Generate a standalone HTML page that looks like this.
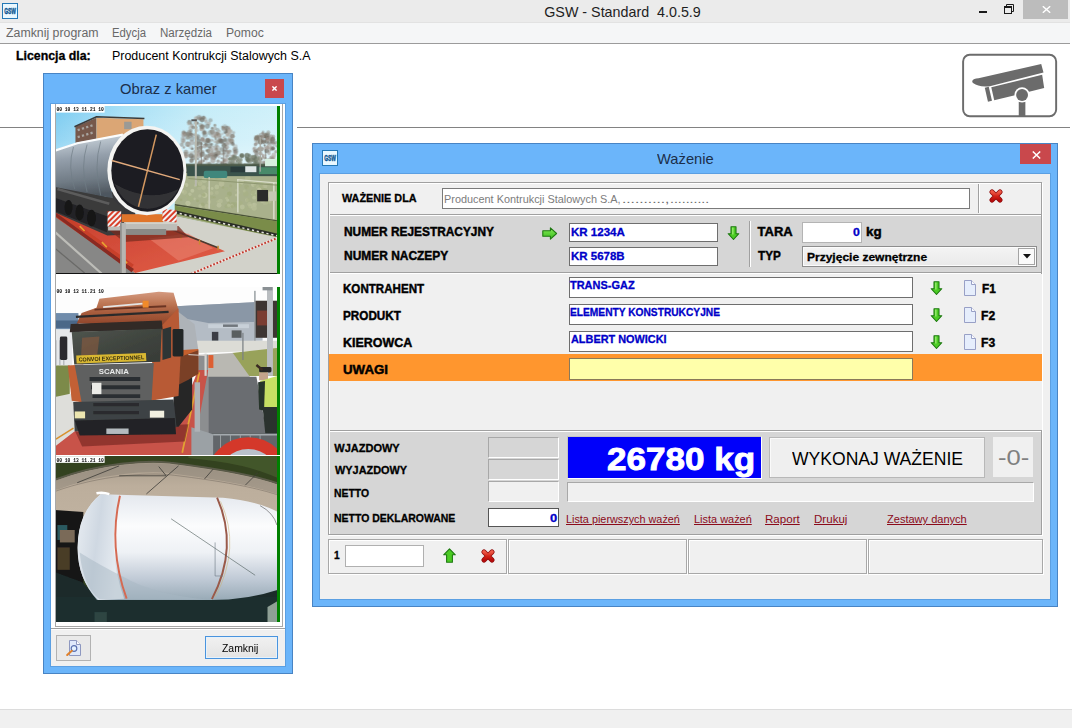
<!DOCTYPE html>
<html lang="pl">
<head>
<meta charset="utf-8">
<title>GSW - Standard 4.0.5.9</title>
<style>
html,body{margin:0;padding:0;}
body{width:1072px;height:728px;overflow:hidden;background:#fff;position:relative;font-family:"Liberation Sans","DejaVu Sans",sans-serif;color:#000;}
.a{position:absolute;box-sizing:border-box;}
.t{position:absolute;white-space:nowrap;line-height:normal;transform-origin:0 0;}
.lnk{text-decoration:underline;}
svg{position:absolute;display:block;overflow:hidden;}
</style>
</head>
<body>
<div class="a" style="left:0px;top:0px;width:1070px;height:22px;background:#ebebeb;"></div>
<div class="a" style="left:0px;top:22px;width:1070px;height:1px;background:#e2e2e2;"></div>
<div class="a" style="left:0px;top:23px;width:1070px;height:20px;background:#f5f6f7;"></div>
<div class="a" style="left:0px;top:43px;width:1070px;height:1px;background:#9b9b9b;"></div>
<div class="a" style="left:0px;top:127px;width:1070px;height:1px;background:#828282;"></div>
<div class="a" style="left:293px;top:120px;width:4px;height:15px;background:#fff;"></div>
<div class="a" style="left:0px;top:709px;width:1072px;height:19px;background:#f0f0f0;border-top:1px solid #dcdcdc;"></div>
<svg id="ico1" style="left:2px;top:3px" width="16" height="16" viewBox="0 0 16 16"><rect x="0.5" y="0.5" width="15" height="15" fill="#e9f8ff" stroke="#2478b6"/><text x="2.2" y="11.3" font-size="8.6" font-weight="bold" fill="#0f5590" stroke="#0f5590" stroke-width="0.4" font-family="Liberation Sans, sans-serif" textLength="11.8" lengthAdjust="spacingAndGlyphs">GSW</text></svg>
<span class="t " id="tt" style="left:544.24px;top:3.66px;font-size:14.3px;font-weight:normal;color:#1e1e1e;">GSW - Standard&nbsp; 4.0.5.9</span>
<div class="a" style="left:979px;top:11px;width:8px;height:2px;background:#1a1a1a;"></div>
<svg style="left:1004px;top:4px" width="11" height="11" viewBox="0 0 11 11"><path d="M2.5 2V0.5H9.5V7.5H8" fill="none" stroke="#1a1a1a"/><rect x="0.5" y="2.5" width="7" height="7" fill="none" stroke="#1a1a1a"/><rect x="0" y="2" width="8" height="2" fill="#1a1a1a"/></svg>
<div class="a" style="left:1023px;top:0px;width:45px;height:19px;background:#bcbcbc;"></div>
<svg style="left:1041.5px;top:6px" width="9" height="7" viewBox="0 0 9 7"><path d="M0.8 0.3L8.2 6.7M8.2 0.3L0.8 6.7" stroke="#fff" stroke-width="1.5" fill="none"/></svg>
<span class="t " id="m1" style="left:6.25px;top:26.24px;font-size:12px;font-weight:normal;color:#686868;transform:scaleX(1.0276);">Zamknij program</span>
<span class="t " id="m2" style="left:112.20px;top:26.24px;font-size:12px;font-weight:normal;color:#686868;transform:scaleX(0.9435);">Edycja</span>
<span class="t " id="m3" style="left:159.97px;top:26.24px;font-size:12px;font-weight:normal;color:#686868;transform:scaleX(0.9620);">Narzędzia</span>
<span class="t " id="m4" style="left:225.95px;top:26.24px;font-size:12px;font-weight:normal;color:#686868;transform:scaleX(1.0120);">Pomoc</span>
<span class="t " id="lic1" style="left:16.34px;top:49.04px;font-size:12px;font-weight:bold;color:#000;transform:scaleX(1.0259);-webkit-text-stroke:0.3px #000;">Licencja dla:</span>
<span class="t " id="lic2" style="left:111.99px;top:49.04px;font-size:12px;font-weight:normal;color:#000;transform:scaleX(1.0371);">Producent Kontrukcji Stalowych S.A</span>
<svg id="camicon" style="left:950px;top:44px" width="122" height="83" viewBox="0 0 1070 728"><rect x="115" y="95" width="816" height="538" rx="58" fill="#fff" stroke="#6c6c6c" stroke-width="17"/><g fill="#6b6b6b"><path d="M196 322Q205 300 250 300L800 176L820 250L350 370Q250 380 205 345Q192 335 196 322Z"/><path d="M305 383L340 376L368 497L333 506Z"/><path d="M362 380L808 270L826 386L388 493Z"/><rect x="603" y="505" width="58" height="128"/></g><circle cx="632" cy="447" r="67" fill="#fff"/><circle cx="632" cy="447" r="52" fill="#6b6b6b"/></svg>

<div class="a" style="left:43px;top:73px;width:250px;height:601px;background:#6bb5fa;border:1px solid #4884c4;"></div>
<span class="t " id="ct" style="left:119.64px;top:80.86px;font-size:14.3px;font-weight:normal;color:#1b2f4a;transform:scaleX(1.0313);">Obraz z kamer</span>
<div class="a" style="left:265px;top:79px;width:19px;height:19px;background:#c9484c;"></div>
<svg style="left:272px;top:86px" width="5" height="5" viewBox="0 0 5 5"><path d="M0.4 0.4L4.6 4.6M4.6 0.4L0.4 4.6" stroke="#fff" stroke-width="1.4" fill="none"/></svg>
<div class="a" style="left:50px;top:103px;width:236px;height:564px;background:#5b9fe2;"></div>
<div class="a" style="left:51px;top:104px;width:234px;height:562px;background:#f0f0f0;"></div>
<div class="a" style="left:51px;top:104px;width:234px;height:524px;background:#fff;"></div>
<div class="a" style="left:51px;top:628px;width:234px;height:1px;background:#a0a0a0;"></div>
<div class="a" style="left:51px;top:629px;width:234px;height:1px;background:#fff;"></div>
<div class="a" style="left:55px;top:104px;width:1px;height:523px;background:#a8a8a8;"></div>
<div class="a" style="left:282px;top:104px;width:1px;height:523px;background:#a8a8a8;"></div>
<div class="a" style="left:55px;top:626px;width:228px;height:1px;background:#a8a8a8;"></div>
<div class="a" style="left:277px;top:106px;width:3px;height:168px;background:#008000;"></div>
<div class="a" style="left:277px;top:287px;width:3px;height:168px;background:#008000;"></div>
<div class="a" style="left:277px;top:456px;width:3px;height:166px;background:#008000;"></div>
<svg id="p1" style="left:56px;top:105px" width="221" height="169" viewBox="24.3 20.2 894.1 683.8" preserveAspectRatio="none">
<defs>
<linearGradient id="sky1" x1="0" y1="0" x2="1" y2="0.35"><stop offset="0" stop-color="#70c6ef"/><stop offset="0.3" stop-color="#a6dff6"/><stop offset="0.6" stop-color="#c4ecf8"/><stop offset="1" stop-color="#d2f1fa"/></linearGradient>
<linearGradient id="sky1b" x1="0" y1="0" x2="0" y2="1"><stop offset="0" stop-color="#fff" stop-opacity="0"/><stop offset="0.5" stop-color="#fff" stop-opacity="0.15"/><stop offset="1" stop-color="#fff" stop-opacity="0.55"/></linearGradient>
<linearGradient id="pipe1" x1="0" y1="0" x2="0.12" y2="1"><stop offset="0" stop-color="#f4f7f9"/><stop offset="0.1" stop-color="#c4ced6"/><stop offset="0.4" stop-color="#949fab"/><stop offset="0.75" stop-color="#707b85"/><stop offset="1" stop-color="#4e565e"/></linearGradient>
<linearGradient id="plat1" x1="0" y1="0" x2="1" y2="1"><stop offset="0" stop-color="#c63e2e"/><stop offset="1" stop-color="#e25e48"/></linearGradient>
<filter id="bl1" x="-5%" y="-5%" width="110%" height="110%"><feGaussianBlur stdDeviation="2.2"/></filter>
<filter id="bl1b" x="-5%" y="-5%" width="110%" height="110%"><feGaussianBlur stdDeviation="3"/></filter>
<pattern id="chev" width="16" height="16" patternUnits="userSpaceOnUse" patternTransform="rotate(45)"><rect width="16" height="16" fill="#f2f2f2"/><rect width="8" height="16" fill="#d8402c"/></pattern>
</defs>
<rect x="0" y="0" width="940" height="720" fill="url(#sky1)"/>
<rect x="0" y="0" width="940" height="320" fill="url(#sky1b)"/>
<g filter="url(#bl1b)">
<circle cx="598" cy="205" r="8.6" fill="#8d857c" opacity="0.68"/><circle cx="663" cy="213" r="10.4" fill="#a39a92" opacity="0.36"/><circle cx="593" cy="181" r="4.6" fill="#b0a8a0" opacity="0.37"/><circle cx="541" cy="131" r="8.4" fill="#8a8478" opacity="0.73"/><circle cx="567" cy="141" r="10.8" fill="#8d857c" opacity="0.57"/><circle cx="647" cy="218" r="7.8" fill="#8a8478" opacity="0.47"/><circle cx="626" cy="131" r="8.1" fill="#6f6a60" opacity="0.43"/><circle cx="667" cy="218" r="8.0" fill="#8a8478" opacity="0.43"/><circle cx="590" cy="111" r="6.2" fill="#8a8478" opacity="0.72"/><circle cx="586" cy="208" r="5.3" fill="#9c9088" opacity="0.45"/><circle cx="560" cy="137" r="10.1" fill="#6f6a60" opacity="0.53"/><circle cx="595" cy="153" r="7.6" fill="#a39a92" opacity="0.65"/><circle cx="644" cy="227" r="4.3" fill="#6f6a60" opacity="0.38"/><circle cx="546" cy="138" r="9.7" fill="#7a746a" opacity="0.63"/><circle cx="561" cy="127" r="7.2" fill="#9c9088" opacity="0.39"/><circle cx="604" cy="253" r="4.5" fill="#6f6a60" opacity="0.63"/><circle cx="564" cy="90" r="9.8" fill="#7a746a" opacity="0.64"/><circle cx="648" cy="132" r="10.6" fill="#7a746a" opacity="0.42"/><circle cx="626" cy="186" r="9.4" fill="#a39a92" opacity="0.65"/><circle cx="551" cy="227" r="7.5" fill="#a39a92" opacity="0.53"/><circle cx="540" cy="141" r="9.7" fill="#9c9088" opacity="0.57"/><circle cx="591" cy="74" r="8.8" fill="#b0a8a0" opacity="0.73"/><circle cx="632" cy="204" r="5.6" fill="#a39a92" opacity="0.35"/><circle cx="629" cy="133" r="6.0" fill="#a39a92" opacity="0.52"/><circle cx="571" cy="225" r="10.7" fill="#6f6a60" opacity="0.69"/><circle cx="674" cy="145" r="9.2" fill="#b0a8a0" opacity="0.71"/><circle cx="626" cy="78" r="9.6" fill="#b0a8a0" opacity="0.51"/><circle cx="568" cy="213" r="6.8" fill="#a39a92" opacity="0.38"/><circle cx="620" cy="209" r="6.4" fill="#8d857c" opacity="0.39"/><circle cx="558" cy="140" r="10.6" fill="#8a8478" opacity="0.36"/><circle cx="656" cy="114" r="5.0" fill="#7a746a" opacity="0.73"/><circle cx="568" cy="129" r="4.8" fill="#b0a8a0" opacity="0.75"/><circle cx="558" cy="185" r="4.6" fill="#8d857c" opacity="0.65"/><circle cx="609" cy="101" r="8.8" fill="#8a8478" opacity="0.36"/><circle cx="667" cy="148" r="5.0" fill="#8a8478" opacity="0.72"/><circle cx="614" cy="115" r="8.5" fill="#8d857c" opacity="0.63"/><circle cx="609" cy="230" r="5.2" fill="#9c9088" opacity="0.44"/><circle cx="557" cy="152" r="8.5" fill="#8a8478" opacity="0.67"/><circle cx="686" cy="161" r="9.6" fill="#9c9088" opacity="0.51"/><circle cx="624" cy="128" r="7.4" fill="#6f6a60" opacity="0.36"/><circle cx="654" cy="179" r="5.8" fill="#6f6a60" opacity="0.59"/><circle cx="572" cy="245" r="9.1" fill="#7a746a" opacity="0.73"/><circle cx="587" cy="205" r="5.6" fill="#a39a92" opacity="0.49"/><circle cx="533" cy="181" r="8.3" fill="#8d857c" opacity="0.54"/><circle cx="571" cy="97" r="4.6" fill="#6f6a60" opacity="0.40"/><circle cx="560" cy="224" r="5.4" fill="#a39a92" opacity="0.52"/><circle cx="597" cy="148" r="10.6" fill="#6f6a60" opacity="0.51"/><circle cx="549" cy="227" r="9.1" fill="#a39a92" opacity="0.75"/><circle cx="673" cy="183" r="7.3" fill="#6f6a60" opacity="0.41"/><circle cx="649" cy="82" r="8.6" fill="#7a746a" opacity="0.41"/><circle cx="601" cy="166" r="9.6" fill="#6f6a60" opacity="0.61"/><circle cx="536" cy="154" r="7.0" fill="#9c9088" opacity="0.43"/><circle cx="621" cy="158" r="5.5" fill="#8a8478" opacity="0.45"/><circle cx="577" cy="144" r="6.9" fill="#a39a92" opacity="0.37"/><circle cx="607" cy="75" r="8.6" fill="#9c9088" opacity="0.71"/><circle cx="545" cy="216" r="7.5" fill="#8a8478" opacity="0.41"/><circle cx="537" cy="164" r="9.4" fill="#8a8478" opacity="0.35"/><circle cx="622" cy="130" r="7.3" fill="#6f6a60" opacity="0.40"/><circle cx="673" cy="201" r="7.7" fill="#b0a8a0" opacity="0.66"/><circle cx="659" cy="216" r="5.7" fill="#7a746a" opacity="0.37"/><circle cx="656" cy="209" r="4.2" fill="#8d857c" opacity="0.53"/><circle cx="569" cy="124" r="7.6" fill="#6f6a60" opacity="0.46"/><circle cx="540" cy="165" r="7.6" fill="#a39a92" opacity="0.63"/><circle cx="667" cy="102" r="5.8" fill="#8a8478" opacity="0.71"/><circle cx="628" cy="234" r="6.9" fill="#b0a8a0" opacity="0.53"/><circle cx="647" cy="192" r="4.5" fill="#6f6a60" opacity="0.47"/><circle cx="663" cy="231" r="10.6" fill="#6f6a60" opacity="0.61"/><circle cx="659" cy="244" r="10.8" fill="#a39a92" opacity="0.65"/><circle cx="674" cy="222" r="5.1" fill="#6f6a60" opacity="0.68"/><circle cx="640" cy="226" r="7.6" fill="#7a746a" opacity="0.52"/><circle cx="597" cy="194" r="6.6" fill="#7a746a" opacity="0.57"/><circle cx="602" cy="175" r="6.3" fill="#8a8478" opacity="0.47"/><circle cx="638" cy="162" r="10.4" fill="#a39a92" opacity="0.74"/><circle cx="645" cy="202" r="4.3" fill="#9c9088" opacity="0.42"/><circle cx="615" cy="80" r="9.9" fill="#6f6a60" opacity="0.68"/><circle cx="610" cy="209" r="10.4" fill="#8a8478" opacity="0.55"/><circle cx="592" cy="217" r="9.6" fill="#a39a92" opacity="0.52"/><circle cx="682" cy="213" r="8.4" fill="#9c9088" opacity="0.45"/><circle cx="583" cy="140" r="5.9" fill="#8d857c" opacity="0.53"/><circle cx="580" cy="233" r="10.5" fill="#7a746a" opacity="0.60"/><circle cx="677" cy="193" r="10.6" fill="#a39a92" opacity="0.45"/><circle cx="644" cy="258" r="8.4" fill="#8a8478" opacity="0.65"/><circle cx="598" cy="238" r="5.2" fill="#7a746a" opacity="0.67"/><circle cx="627" cy="169" r="4.1" fill="#8a8478" opacity="0.57"/><circle cx="632" cy="234" r="10.5" fill="#8d857c" opacity="0.61"/><circle cx="574" cy="104" r="7.8" fill="#b0a8a0" opacity="0.74"/><circle cx="599" cy="213" r="5.6" fill="#a39a92" opacity="0.68"/><circle cx="595" cy="93" r="6.8" fill="#7a746a" opacity="0.74"/><circle cx="617" cy="160" r="8.4" fill="#7a746a" opacity="0.52"/><circle cx="673" cy="198" r="6.7" fill="#8a8478" opacity="0.62"/><circle cx="604" cy="218" r="6.1" fill="#b0a8a0" opacity="0.42"/><circle cx="611" cy="176" r="6.5" fill="#7a746a" opacity="0.74"/><circle cx="574" cy="156" r="10.8" fill="#7a746a" opacity="0.44"/><circle cx="631" cy="223" r="4.6" fill="#7a746a" opacity="0.55"/><circle cx="629" cy="238" r="4.0" fill="#7a746a" opacity="0.68"/><circle cx="650" cy="230" r="6.8" fill="#7a746a" opacity="0.47"/><circle cx="619" cy="246" r="7.7" fill="#9c9088" opacity="0.41"/><circle cx="667" cy="115" r="8.2" fill="#9c9088" opacity="0.48"/><circle cx="643" cy="166" r="9.1" fill="#6f6a60" opacity="0.41"/><circle cx="643" cy="95" r="7.6" fill="#b0a8a0" opacity="0.64"/><circle cx="623" cy="135" r="7.7" fill="#8a8478" opacity="0.58"/><circle cx="616" cy="158" r="8.8" fill="#9c9088" opacity="0.71"/><circle cx="585" cy="94" r="5.6" fill="#8d857c" opacity="0.37"/><circle cx="561" cy="96" r="6.6" fill="#b0a8a0" opacity="0.57"/><circle cx="568" cy="113" r="8.8" fill="#b0a8a0" opacity="0.46"/><circle cx="592" cy="177" r="10.5" fill="#8a8478" opacity="0.39"/><circle cx="544" cy="156" r="7.3" fill="#9c9088" opacity="0.38"/><circle cx="605" cy="255" r="5.4" fill="#6f6a60" opacity="0.61"/><circle cx="541" cy="193" r="4.5" fill="#6f6a60" opacity="0.46"/><circle cx="673" cy="193" r="5.4" fill="#8a8478" opacity="0.41"/><circle cx="610" cy="256" r="6.1" fill="#8a8478" opacity="0.40"/><circle cx="557" cy="178" r="10.8" fill="#8d857c" opacity="0.63"/><circle cx="593" cy="122" r="7.6" fill="#b0a8a0" opacity="0.54"/><circle cx="621" cy="71" r="7.8" fill="#7a746a" opacity="0.74"/><circle cx="622" cy="165" r="7.2" fill="#9c9088" opacity="0.55"/><circle cx="692" cy="167" r="6.7" fill="#a39a92" opacity="0.38"/><circle cx="670" cy="216" r="5.8" fill="#7a746a" opacity="0.40"/><circle cx="636" cy="106" r="10.2" fill="#6f6a60" opacity="0.50"/><circle cx="537" cy="171" r="6.8" fill="#a39a92" opacity="0.35"/><circle cx="558" cy="174" r="6.1" fill="#a39a92" opacity="0.52"/><circle cx="592" cy="194" r="6.3" fill="#7a746a" opacity="0.65"/><circle cx="627" cy="141" r="10.5" fill="#6f6a60" opacity="0.35"/><circle cx="609" cy="120" r="4.5" fill="#b0a8a0" opacity="0.75"/><circle cx="571" cy="138" r="7.0" fill="#7a746a" opacity="0.69"/><circle cx="609" cy="192" r="8.6" fill="#6f6a60" opacity="0.72"/><circle cx="612" cy="222" r="7.6" fill="#a39a92" opacity="0.66"/><circle cx="623" cy="106" r="4.2" fill="#9c9088" opacity="0.60"/><circle cx="678" cy="120" r="7.8" fill="#6f6a60" opacity="0.38"/><circle cx="659" cy="144" r="8.3" fill="#a39a92" opacity="0.61"/><circle cx="608" cy="192" r="10.5" fill="#a39a92" opacity="0.42"/><circle cx="575" cy="197" r="5.8" fill="#6f6a60" opacity="0.74"/><circle cx="608" cy="251" r="6.1" fill="#8a8478" opacity="0.62"/><circle cx="659" cy="225" r="4.5" fill="#8a8478" opacity="0.71"/><circle cx="574" cy="171" r="10.3" fill="#9c9088" opacity="0.53"/><circle cx="634" cy="204" r="4.6" fill="#7a746a" opacity="0.57"/><circle cx="592" cy="225" r="9.7" fill="#a39a92" opacity="0.70"/><circle cx="612" cy="106" r="6.9" fill="#8a8478" opacity="0.43"/><circle cx="603" cy="256" r="7.5" fill="#8a8478" opacity="0.74"/><circle cx="652" cy="220" r="8.4" fill="#9c9088" opacity="0.69"/><circle cx="675" cy="222" r="6.7" fill="#6f6a60" opacity="0.53"/><circle cx="683" cy="144" r="10.1" fill="#8d857c" opacity="0.40"/><circle cx="550" cy="210" r="9.6" fill="#8a8478" opacity="0.55"/><circle cx="681" cy="213" r="10.5" fill="#8a8478" opacity="0.69"/><circle cx="651" cy="161" r="4.8" fill="#a39a92" opacity="0.41"/><circle cx="638" cy="164" r="9.8" fill="#6f6a60" opacity="0.61"/><circle cx="617" cy="103" r="7.9" fill="#8d857c" opacity="0.35"/><circle cx="655" cy="224" r="4.3" fill="#6f6a60" opacity="0.47"/><circle cx="640" cy="206" r="8.5" fill="#6f6a60" opacity="0.66"/><circle cx="648" cy="202" r="10.6" fill="#a39a92" opacity="0.51"/><circle cx="622" cy="246" r="4.1" fill="#7a746a" opacity="0.75"/><circle cx="604" cy="225" r="9.9" fill="#a39a92" opacity="0.54"/><circle cx="616" cy="219" r="10.7" fill="#6f6a60" opacity="0.61"/><circle cx="645" cy="185" r="10.2" fill="#6f6a60" opacity="0.52"/><circle cx="609" cy="252" r="10.5" fill="#a39a92" opacity="0.55"/><circle cx="589" cy="90" r="6.5" fill="#b0a8a0" opacity="0.43"/><circle cx="632" cy="88" r="7.5" fill="#a39a92" opacity="0.55"/><circle cx="633" cy="253" r="5.4" fill="#b0a8a0" opacity="0.44"/><circle cx="615" cy="116" r="10.7" fill="#b0a8a0" opacity="0.59"/><circle cx="656" cy="128" r="10.4" fill="#8d857c" opacity="0.73"/><circle cx="642" cy="220" r="5.5" fill="#8a8478" opacity="0.41"/><circle cx="631" cy="178" r="6.8" fill="#6f6a60" opacity="0.70"/><circle cx="603" cy="71" r="10.5" fill="#7a746a" opacity="0.43"/><circle cx="579" cy="111" r="7.3" fill="#7a746a" opacity="0.62"/><circle cx="577" cy="212" r="6.3" fill="#a39a92" opacity="0.39"/><circle cx="632" cy="183" r="6.9" fill="#8d857c" opacity="0.57"/><circle cx="615" cy="108" r="9.4" fill="#7a746a" opacity="0.68"/><circle cx="596" cy="179" r="7.3" fill="#7a746a" opacity="0.57"/><circle cx="569" cy="189" r="9.2" fill="#b0a8a0" opacity="0.36"/><circle cx="551" cy="218" r="9.4" fill="#8d857c" opacity="0.50"/><circle cx="542" cy="190" r="4.4" fill="#a39a92" opacity="0.65"/><circle cx="729" cy="160" r="5.9" fill="#8a8478" opacity="0.37"/><circle cx="704" cy="117" r="10.5" fill="#7a746a" opacity="0.35"/><circle cx="707" cy="106" r="8.4" fill="#8d857c" opacity="0.36"/><circle cx="709" cy="250" r="10.7" fill="#9c9088" opacity="0.50"/><circle cx="705" cy="248" r="7.5" fill="#b0a8a0" opacity="0.42"/><circle cx="719" cy="118" r="9.8" fill="#9c9088" opacity="0.41"/><circle cx="709" cy="271" r="7.2" fill="#9c9088" opacity="0.66"/><circle cx="725" cy="209" r="9.3" fill="#a39a92" opacity="0.51"/><circle cx="684" cy="141" r="7.8" fill="#a39a92" opacity="0.74"/><circle cx="743" cy="132" r="5.9" fill="#8d857c" opacity="0.43"/><circle cx="660" cy="232" r="10.8" fill="#a39a92" opacity="0.44"/><circle cx="670" cy="225" r="8.7" fill="#6f6a60" opacity="0.57"/><circle cx="712" cy="114" r="9.5" fill="#7a746a" opacity="0.47"/><circle cx="676" cy="168" r="9.2" fill="#a39a92" opacity="0.53"/><circle cx="715" cy="229" r="6.0" fill="#8a8478" opacity="0.43"/><circle cx="729" cy="207" r="5.7" fill="#8a8478" opacity="0.44"/><circle cx="720" cy="124" r="10.9" fill="#8d857c" opacity="0.35"/><circle cx="724" cy="162" r="7.1" fill="#7a746a" opacity="0.37"/><circle cx="700" cy="219" r="5.3" fill="#9c9088" opacity="0.58"/><circle cx="734" cy="167" r="10.1" fill="#b0a8a0" opacity="0.59"/><circle cx="712" cy="119" r="4.0" fill="#6f6a60" opacity="0.59"/><circle cx="687" cy="162" r="6.6" fill="#a39a92" opacity="0.37"/><circle cx="715" cy="190" r="9.1" fill="#a39a92" opacity="0.68"/><circle cx="719" cy="139" r="6.6" fill="#8a8478" opacity="0.47"/><circle cx="718" cy="265" r="7.8" fill="#8d857c" opacity="0.51"/><circle cx="717" cy="121" r="5.1" fill="#8a8478" opacity="0.39"/><circle cx="727" cy="253" r="6.9" fill="#7a746a" opacity="0.62"/><circle cx="695" cy="200" r="9.2" fill="#7a746a" opacity="0.52"/><circle cx="750" cy="199" r="9.6" fill="#6f6a60" opacity="0.43"/><circle cx="702" cy="151" r="4.0" fill="#a39a92" opacity="0.52"/><circle cx="719" cy="139" r="10.2" fill="#b0a8a0" opacity="0.66"/><circle cx="713" cy="205" r="5.0" fill="#9c9088" opacity="0.71"/><circle cx="740" cy="227" r="6.6" fill="#8a8478" opacity="0.42"/><circle cx="693" cy="219" r="5.2" fill="#8d857c" opacity="0.39"/><circle cx="658" cy="195" r="10.8" fill="#a39a92" opacity="0.47"/><circle cx="711" cy="174" r="10.4" fill="#7a746a" opacity="0.37"/><circle cx="734" cy="165" r="10.3" fill="#8a8478" opacity="0.63"/><circle cx="737" cy="146" r="10.0" fill="#8a8478" opacity="0.51"/><circle cx="732" cy="124" r="5.3" fill="#a39a92" opacity="0.37"/><circle cx="724" cy="177" r="6.5" fill="#a39a92" opacity="0.45"/><circle cx="697" cy="108" r="4.3" fill="#8a8478" opacity="0.69"/><circle cx="685" cy="126" r="6.3" fill="#b0a8a0" opacity="0.59"/><circle cx="666" cy="168" r="6.1" fill="#b0a8a0" opacity="0.47"/><circle cx="705" cy="245" r="6.6" fill="#8a8478" opacity="0.53"/><circle cx="745" cy="200" r="7.4" fill="#a39a92" opacity="0.53"/><circle cx="670" cy="136" r="9.9" fill="#9c9088" opacity="0.54"/><circle cx="720" cy="210" r="7.0" fill="#8d857c" opacity="0.67"/><circle cx="663" cy="188" r="4.3" fill="#a39a92" opacity="0.38"/><circle cx="700" cy="113" r="7.6" fill="#8d857c" opacity="0.65"/><circle cx="738" cy="146" r="9.5" fill="#8d857c" opacity="0.69"/><circle cx="749" cy="188" r="9.7" fill="#a39a92" opacity="0.40"/><circle cx="726" cy="159" r="9.7" fill="#9c9088" opacity="0.42"/><circle cx="717" cy="108" r="4.5" fill="#7a746a" opacity="0.59"/><circle cx="705" cy="240" r="8.3" fill="#9c9088" opacity="0.53"/><circle cx="704" cy="276" r="7.4" fill="#8a8478" opacity="0.46"/><circle cx="676" cy="188" r="4.3" fill="#a39a92" opacity="0.51"/><circle cx="687" cy="155" r="6.3" fill="#b0a8a0" opacity="0.42"/><circle cx="709" cy="161" r="7.7" fill="#6f6a60" opacity="0.69"/><circle cx="739" cy="177" r="7.7" fill="#6f6a60" opacity="0.70"/><circle cx="746" cy="244" r="8.4" fill="#b0a8a0" opacity="0.65"/><circle cx="683" cy="229" r="6.6" fill="#a39a92" opacity="0.49"/><circle cx="708" cy="132" r="5.2" fill="#6f6a60" opacity="0.73"/><circle cx="694" cy="251" r="6.2" fill="#9c9088" opacity="0.58"/><circle cx="690" cy="148" r="4.0" fill="#8d857c" opacity="0.44"/><circle cx="695" cy="257" r="6.9" fill="#7a746a" opacity="0.71"/><circle cx="722" cy="221" r="8.6" fill="#8d857c" opacity="0.37"/><circle cx="679" cy="170" r="7.7" fill="#8a8478" opacity="0.44"/><circle cx="670" cy="156" r="5.4" fill="#8a8478" opacity="0.68"/><circle cx="708" cy="199" r="9.6" fill="#6f6a60" opacity="0.41"/><circle cx="739" cy="230" r="10.1" fill="#9c9088" opacity="0.46"/><circle cx="724" cy="110" r="4.4" fill="#9c9088" opacity="0.57"/><circle cx="680" cy="247" r="7.1" fill="#8a8478" opacity="0.64"/><circle cx="705" cy="274" r="4.3" fill="#8a8478" opacity="0.36"/><circle cx="713" cy="222" r="10.4" fill="#8d857c" opacity="0.35"/><circle cx="657" cy="163" r="5.0" fill="#a39a92" opacity="0.56"/><circle cx="679" cy="135" r="6.9" fill="#8a8478" opacity="0.42"/><circle cx="695" cy="235" r="4.3" fill="#6f6a60" opacity="0.66"/><circle cx="704" cy="183" r="9.9" fill="#6f6a60" opacity="0.71"/><circle cx="742" cy="225" r="5.2" fill="#8d857c" opacity="0.45"/><circle cx="694" cy="166" r="10.2" fill="#6f6a60" opacity="0.73"/><circle cx="704" cy="210" r="8.5" fill="#6f6a60" opacity="0.52"/><circle cx="714" cy="128" r="5.9" fill="#6f6a60" opacity="0.72"/><circle cx="717" cy="174" r="7.6" fill="#a39a92" opacity="0.45"/><circle cx="709" cy="266" r="10.6" fill="#6f6a60" opacity="0.72"/><circle cx="717" cy="241" r="8.2" fill="#b0a8a0" opacity="0.71"/><circle cx="676" cy="136" r="8.7" fill="#8a8478" opacity="0.54"/><circle cx="728" cy="128" r="10.0" fill="#b0a8a0" opacity="0.73"/><circle cx="710" cy="272" r="9.5" fill="#b0a8a0" opacity="0.60"/><circle cx="749" cy="229" r="5.0" fill="#8d857c" opacity="0.39"/><circle cx="690" cy="165" r="10.8" fill="#6f6a60" opacity="0.36"/><circle cx="747" cy="209" r="8.4" fill="#6f6a60" opacity="0.38"/><circle cx="751" cy="214" r="9.3" fill="#a39a92" opacity="0.68"/><circle cx="726" cy="115" r="4.5" fill="#9c9088" opacity="0.65"/><circle cx="697" cy="137" r="5.7" fill="#a39a92" opacity="0.39"/><circle cx="752" cy="207" r="9.7" fill="#6f6a60" opacity="0.38"/><circle cx="705" cy="120" r="7.3" fill="#a39a92" opacity="0.39"/><circle cx="706" cy="150" r="6.2" fill="#b0a8a0" opacity="0.45"/><circle cx="675" cy="258" r="4.3" fill="#9c9088" opacity="0.50"/><circle cx="683" cy="268" r="7.5" fill="#9c9088" opacity="0.47"/><circle cx="704" cy="112" r="4.2" fill="#8a8478" opacity="0.66"/><circle cx="849" cy="237" r="7.8" fill="#a39a92" opacity="0.69"/><circle cx="889" cy="148" r="6.0" fill="#b0a8a0" opacity="0.40"/><circle cx="884" cy="247" r="10.8" fill="#8d857c" opacity="0.54"/><circle cx="905" cy="223" r="9.8" fill="#b0a8a0" opacity="0.64"/><circle cx="905" cy="179" r="8.0" fill="#a39a92" opacity="0.51"/><circle cx="881" cy="246" r="7.5" fill="#8d857c" opacity="0.78"/><circle cx="876" cy="146" r="10.9" fill="#8a8478" opacity="0.71"/><circle cx="852" cy="164" r="6.8" fill="#b0a8a0" opacity="0.76"/><circle cx="871" cy="149" r="8.5" fill="#7a746a" opacity="0.48"/><circle cx="868" cy="254" r="7.5" fill="#b0a8a0" opacity="0.79"/><circle cx="840" cy="145" r="4.9" fill="#8a8478" opacity="0.70"/><circle cx="873" cy="139" r="6.4" fill="#7a746a" opacity="0.61"/><circle cx="894" cy="159" r="7.9" fill="#7a746a" opacity="0.47"/><circle cx="833" cy="214" r="8.1" fill="#a39a92" opacity="0.53"/><circle cx="847" cy="149" r="7.6" fill="#7a746a" opacity="0.52"/><circle cx="859" cy="134" r="5.1" fill="#a39a92" opacity="0.79"/><circle cx="866" cy="141" r="6.4" fill="#a39a92" opacity="0.53"/><circle cx="890" cy="252" r="9.1" fill="#8d857c" opacity="0.47"/><circle cx="860" cy="168" r="5.1" fill="#a39a92" opacity="0.72"/><circle cx="869" cy="149" r="5.4" fill="#6f6a60" opacity="0.76"/><circle cx="863" cy="253" r="7.2" fill="#8d857c" opacity="0.56"/><circle cx="882" cy="139" r="7.5" fill="#6f6a60" opacity="0.52"/><circle cx="896" cy="197" r="9.2" fill="#8d857c" opacity="0.70"/><circle cx="898" cy="168" r="8.0" fill="#6f6a60" opacity="0.66"/><circle cx="894" cy="148" r="8.6" fill="#9c9088" opacity="0.66"/><circle cx="852" cy="176" r="5.3" fill="#8d857c" opacity="0.58"/><circle cx="857" cy="240" r="4.7" fill="#b0a8a0" opacity="0.50"/><circle cx="839" cy="225" r="5.1" fill="#9c9088" opacity="0.57"/><circle cx="836" cy="206" r="6.9" fill="#6f6a60" opacity="0.66"/><circle cx="904" cy="147" r="6.3" fill="#8d857c" opacity="0.56"/><circle cx="825" cy="196" r="4.3" fill="#8a8478" opacity="0.49"/><circle cx="862" cy="129" r="5.4" fill="#7a746a" opacity="0.44"/><circle cx="840" cy="170" r="9.0" fill="#8a8478" opacity="0.41"/><circle cx="880" cy="153" r="6.4" fill="#6f6a60" opacity="0.78"/><circle cx="882" cy="245" r="6.7" fill="#9c9088" opacity="0.77"/><circle cx="867" cy="141" r="8.5" fill="#7a746a" opacity="0.51"/><circle cx="868" cy="196" r="6.9" fill="#b0a8a0" opacity="0.65"/><circle cx="855" cy="147" r="4.8" fill="#7a746a" opacity="0.70"/><circle cx="904" cy="174" r="5.5" fill="#9c9088" opacity="0.78"/><circle cx="853" cy="198" r="10.5" fill="#8d857c" opacity="0.72"/><circle cx="850" cy="158" r="7.9" fill="#a39a92" opacity="0.73"/><circle cx="896" cy="235" r="9.8" fill="#9c9088" opacity="0.73"/><circle cx="846" cy="199" r="7.8" fill="#a39a92" opacity="0.71"/><circle cx="830" cy="203" r="5.6" fill="#6f6a60" opacity="0.55"/><circle cx="871" cy="235" r="5.3" fill="#8d857c" opacity="0.72"/><circle cx="881" cy="154" r="8.6" fill="#7a746a" opacity="0.59"/><circle cx="837" cy="215" r="8.6" fill="#7a746a" opacity="0.46"/><circle cx="862" cy="231" r="4.6" fill="#8a8478" opacity="0.76"/><circle cx="876" cy="168" r="9.8" fill="#6f6a60" opacity="0.63"/><circle cx="860" cy="167" r="4.5" fill="#7a746a" opacity="0.50"/><circle cx="887" cy="207" r="5.6" fill="#9c9088" opacity="0.58"/><circle cx="877" cy="163" r="6.8" fill="#8a8478" opacity="0.47"/><circle cx="901" cy="159" r="9.5" fill="#6f6a60" opacity="0.76"/><circle cx="835" cy="176" r="6.1" fill="#b0a8a0" opacity="0.68"/><circle cx="831" cy="181" r="7.1" fill="#8d857c" opacity="0.62"/><circle cx="870" cy="224" r="5.0" fill="#b0a8a0" opacity="0.62"/><circle cx="827" cy="198" r="8.9" fill="#a39a92" opacity="0.60"/><circle cx="829" cy="177" r="4.0" fill="#9c9088" opacity="0.53"/><circle cx="861" cy="148" r="6.1" fill="#b0a8a0" opacity="0.55"/><circle cx="831" cy="224" r="4.5" fill="#6f6a60" opacity="0.54"/><circle cx="868" cy="184" r="4.3" fill="#6f6a60" opacity="0.77"/><circle cx="849" cy="249" r="7.6" fill="#b0a8a0" opacity="0.70"/><circle cx="886" cy="216" r="6.9" fill="#a39a92" opacity="0.54"/><circle cx="891" cy="161" r="7.3" fill="#8a8478" opacity="0.62"/><circle cx="894" cy="174" r="6.4" fill="#7a746a" opacity="0.62"/><circle cx="884" cy="160" r="9.8" fill="#b0a8a0" opacity="0.53"/><circle cx="917" cy="186" r="6.4" fill="#a39a92" opacity="0.66"/><circle cx="879" cy="155" r="6.2" fill="#7a746a" opacity="0.45"/><circle cx="886" cy="189" r="11.0" fill="#b0a8a0" opacity="0.69"/><circle cx="899" cy="160" r="4.3" fill="#7a746a" opacity="0.44"/><circle cx="914" cy="209" r="7.3" fill="#9c9088" opacity="0.66"/><circle cx="883" cy="131" r="8.3" fill="#8a8478" opacity="0.46"/><circle cx="854" cy="143" r="10.1" fill="#8d857c" opacity="0.49"/><circle cx="856" cy="153" r="9.3" fill="#8d857c" opacity="0.67"/><circle cx="893" cy="161" r="4.7" fill="#6f6a60" opacity="0.41"/><circle cx="884" cy="174" r="6.2" fill="#6f6a60" opacity="0.50"/><circle cx="862" cy="233" r="6.2" fill="#b0a8a0" opacity="0.63"/><circle cx="832" cy="162" r="7.5" fill="#8a8478" opacity="0.42"/><circle cx="904" cy="232" r="8.0" fill="#b0a8a0" opacity="0.58"/><circle cx="902" cy="196" r="8.1" fill="#6f6a60" opacity="0.79"/><circle cx="842" cy="199" r="4.7" fill="#6f6a60" opacity="0.59"/><circle cx="902" cy="160" r="7.0" fill="#8d857c" opacity="0.67"/><circle cx="906" cy="237" r="4.6" fill="#9c9088" opacity="0.45"/><circle cx="847" cy="198" r="8.0" fill="#b0a8a0" opacity="0.69"/><circle cx="876" cy="206" r="9.4" fill="#6f6a60" opacity="0.68"/><circle cx="898" cy="237" r="6.1" fill="#8a8478" opacity="0.68"/><circle cx="827" cy="208" r="5.8" fill="#8d857c" opacity="0.69"/><circle cx="878" cy="193" r="8.6" fill="#9c9088" opacity="0.65"/><circle cx="851" cy="216" r="8.2" fill="#9c9088" opacity="0.73"/><circle cx="851" cy="169" r="10.6" fill="#6f6a60" opacity="0.58"/><circle cx="864" cy="169" r="9.6" fill="#7a746a" opacity="0.78"/><circle cx="894" cy="243" r="7.3" fill="#9c9088" opacity="0.71"/><circle cx="912" cy="172" r="8.0" fill="#7a746a" opacity="0.51"/><circle cx="844" cy="155" r="9.6" fill="#8a8478" opacity="0.53"/><circle cx="835" cy="152" r="9.8" fill="#8a8478" opacity="0.73"/><circle cx="831" cy="159" r="5.7" fill="#b0a8a0" opacity="0.67"/><circle cx="836" cy="155" r="9.7" fill="#7a746a" opacity="0.68"/><circle cx="861" cy="223" r="5.1" fill="#9c9088" opacity="0.71"/><circle cx="877" cy="157" r="5.0" fill="#9c9088" opacity="0.80"/><circle cx="901" cy="244" r="9.6" fill="#8a8478" opacity="0.67"/><circle cx="825" cy="240" r="5.5" fill="#98a090" opacity="0.78"/><circle cx="809" cy="269" r="10.6" fill="#8a9080" opacity="0.61"/><circle cx="831" cy="254" r="9.3" fill="#6a7464" opacity="0.71"/><circle cx="833" cy="249" r="8.2" fill="#6a7464" opacity="0.77"/><circle cx="796" cy="268" r="10.4" fill="#6a7464" opacity="0.67"/><circle cx="764" cy="242" r="6.2" fill="#8a9080" opacity="0.78"/><circle cx="777" cy="267" r="7.2" fill="#8a9080" opacity="0.59"/><circle cx="833" cy="239" r="10.2" fill="#6a7464" opacity="0.72"/><circle cx="796" cy="238" r="8.6" fill="#6a7464" opacity="0.60"/><circle cx="773" cy="243" r="6.2" fill="#98a090" opacity="0.71"/><circle cx="805" cy="272" r="6.7" fill="#7c8474" opacity="0.83"/><circle cx="797" cy="225" r="10.8" fill="#6a7464" opacity="0.80"/><circle cx="753" cy="270" r="7.3" fill="#7c8474" opacity="0.52"/><circle cx="729" cy="239" r="7.7" fill="#7c8474" opacity="0.80"/><circle cx="747" cy="229" r="9.2" fill="#7c8474" opacity="0.59"/><circle cx="739" cy="240" r="10.7" fill="#98a090" opacity="0.56"/><circle cx="815" cy="235" r="6.4" fill="#8a9080" opacity="0.56"/><circle cx="853" cy="239" r="5.4" fill="#7c8474" opacity="0.79"/><circle cx="849" cy="255" r="9.3" fill="#98a090" opacity="0.52"/><circle cx="827" cy="266" r="10.6" fill="#6a7464" opacity="0.71"/><circle cx="737" cy="256" r="7.8" fill="#6a7464" opacity="0.59"/><circle cx="825" cy="261" r="6.0" fill="#8a9080" opacity="0.78"/><circle cx="847" cy="235" r="7.8" fill="#8a9080" opacity="0.78"/><circle cx="825" cy="268" r="5.5" fill="#6a7464" opacity="0.81"/><circle cx="820" cy="261" r="5.6" fill="#98a090" opacity="0.79"/><circle cx="757" cy="235" r="7.0" fill="#8a9080" opacity="0.67"/><circle cx="772" cy="241" r="6.3" fill="#7c8474" opacity="0.56"/><circle cx="727" cy="255" r="7.6" fill="#8a9080" opacity="0.59"/><circle cx="767" cy="253" r="6.6" fill="#6a7464" opacity="0.62"/><circle cx="814" cy="264" r="6.9" fill="#98a090" opacity="0.54"/><circle cx="807" cy="247" r="10.4" fill="#8a9080" opacity="0.70"/><circle cx="802" cy="240" r="9.5" fill="#6a7464" opacity="0.65"/><circle cx="788" cy="261" r="6.4" fill="#98a090" opacity="0.60"/><circle cx="803" cy="244" r="9.4" fill="#6a7464" opacity="0.55"/><circle cx="760" cy="235" r="8.0" fill="#8a9080" opacity="0.66"/><circle cx="807" cy="224" r="6.7" fill="#6a7464" opacity="0.65"/><circle cx="818" cy="242" r="8.4" fill="#8a9080" opacity="0.80"/><circle cx="757" cy="246" r="6.1" fill="#7c8474" opacity="0.79"/><circle cx="836" cy="234" r="9.6" fill="#8a9080" opacity="0.57"/><circle cx="745" cy="234" r="9.9" fill="#6a7464" opacity="0.57"/><circle cx="845" cy="257" r="7.4" fill="#7c8474" opacity="0.68"/><circle cx="769" cy="259" r="8.8" fill="#98a090" opacity="0.53"/><circle cx="738" cy="260" r="5.8" fill="#6a7464" opacity="0.59"/><circle cx="726" cy="238" r="5.2" fill="#6a7464" opacity="0.70"/><circle cx="816" cy="236" r="10.6" fill="#7c8474" opacity="0.54"/><circle cx="776" cy="225" r="10.2" fill="#6a7464" opacity="0.77"/><circle cx="826" cy="233" r="10.4" fill="#6a7464" opacity="0.81"/><circle cx="837" cy="243" r="8.1" fill="#8a9080" opacity="0.51"/><circle cx="822" cy="246" r="6.1" fill="#7c8474" opacity="0.61"/><circle cx="726" cy="239" r="5.1" fill="#8a9080" opacity="0.59"/><circle cx="819" cy="230" r="7.8" fill="#8a9080" opacity="0.75"/><circle cx="842" cy="263" r="9.3" fill="#7c8474" opacity="0.60"/><circle cx="738" cy="252" r="9.6" fill="#7c8474" opacity="0.54"/><circle cx="769" cy="253" r="8.6" fill="#8a9080" opacity="0.55"/><circle cx="736" cy="238" r="6.0" fill="#7c8474" opacity="0.83"/><circle cx="755" cy="259" r="10.0" fill="#7c8474" opacity="0.64"/><circle cx="848" cy="240" r="7.0" fill="#8a9080" opacity="0.79"/><circle cx="776" cy="225" r="8.4" fill="#6a7464" opacity="0.79"/><circle cx="799" cy="243" r="8.1" fill="#6a7464" opacity="0.59"/><circle cx="741" cy="258" r="7.2" fill="#8a9080" opacity="0.52"/>
<path d="M612 170V270M702 190V270M872 200V270" stroke="#7a7268" stroke-width="4" opacity="0.7"/>
<rect x="525" y="258" width="400" height="40" fill="#4c5a48"/>
</g>
<g filter="url(#bl1)">
<!-- grass -->
<path d="M505 296H925V560L505 470Z" fill="#a9b18c"/>
<circle cx="585" cy="400" r="5.1" fill="#c0c6a2" opacity="0.57"/><circle cx="556" cy="422" r="8.2" fill="#a0aa7c" opacity="0.72"/><circle cx="856" cy="336" r="5.2" fill="#a8b286" opacity="0.77"/><circle cx="602" cy="341" r="10.6" fill="#a0aa7c" opacity="0.65"/><circle cx="714" cy="430" r="8.0" fill="#a0aa7c" opacity="0.52"/><circle cx="660" cy="433" r="5.8" fill="#a8b286" opacity="0.43"/><circle cx="552" cy="344" r="8.1" fill="#c0c6a2" opacity="0.75"/><circle cx="846" cy="353" r="6.9" fill="#a0aa7c" opacity="0.70"/><circle cx="684" cy="426" r="9.9" fill="#c0c6a2" opacity="0.66"/><circle cx="766" cy="436" r="8.2" fill="#a8b286" opacity="0.65"/><circle cx="606" cy="388" r="6.7" fill="#c0c6a2" opacity="0.48"/><circle cx="526" cy="360" r="7.8" fill="#a8b286" opacity="0.46"/><circle cx="824" cy="368" r="7.3" fill="#a8b286" opacity="0.51"/><circle cx="823" cy="377" r="10.4" fill="#c0c6a2" opacity="0.62"/><circle cx="622" cy="355" r="9.6" fill="#b8be98" opacity="0.73"/><circle cx="609" cy="429" r="8.6" fill="#c0c6a2" opacity="0.57"/><circle cx="678" cy="357" r="6.4" fill="#a8b286" opacity="0.73"/><circle cx="544" cy="373" r="10.2" fill="#b8be98" opacity="0.51"/><circle cx="607" cy="339" r="9.9" fill="#b8be98" opacity="0.75"/><circle cx="890" cy="382" r="9.1" fill="#b8be98" opacity="0.56"/><circle cx="792" cy="379" r="10.9" fill="#a8b286" opacity="0.75"/><circle cx="619" cy="353" r="8.2" fill="#b8be98" opacity="0.52"/><circle cx="644" cy="413" r="8.7" fill="#b8be98" opacity="0.66"/><circle cx="888" cy="383" r="11.9" fill="#b8be98" opacity="0.58"/><circle cx="759" cy="415" r="6.0" fill="#b8be98" opacity="0.63"/><circle cx="878" cy="415" r="7.3" fill="#c0c6a2" opacity="0.78"/><circle cx="752" cy="424" r="11.4" fill="#a0aa7c" opacity="0.41"/><circle cx="707" cy="446" r="7.1" fill="#a8b286" opacity="0.62"/><circle cx="859" cy="379" r="8.6" fill="#b8be98" opacity="0.56"/><circle cx="618" cy="422" r="7.5" fill="#a0aa7c" opacity="0.67"/><circle cx="653" cy="377" r="7.6" fill="#b8be98" opacity="0.66"/><circle cx="786" cy="368" r="6.3" fill="#b8be98" opacity="0.59"/><circle cx="568" cy="400" r="12.0" fill="#a8b286" opacity="0.68"/><circle cx="714" cy="359" r="7.5" fill="#a8b286" opacity="0.79"/><circle cx="781" cy="335" r="5.8" fill="#a8b286" opacity="0.68"/><circle cx="800" cy="317" r="11.2" fill="#b8be98" opacity="0.65"/><circle cx="536" cy="370" r="6.5" fill="#c0c6a2" opacity="0.56"/><circle cx="855" cy="399" r="5.7" fill="#a0aa7c" opacity="0.68"/><circle cx="726" cy="380" r="10.0" fill="#a0aa7c" opacity="0.77"/><circle cx="665" cy="393" r="5.1" fill="#a0aa7c" opacity="0.48"/><circle cx="566" cy="381" r="6.9" fill="#c0c6a2" opacity="0.63"/><circle cx="656" cy="393" r="6.1" fill="#a0aa7c" opacity="0.41"/><circle cx="888" cy="411" r="8.4" fill="#b8be98" opacity="0.65"/><circle cx="732" cy="364" r="5.1" fill="#a8b286" opacity="0.46"/><circle cx="723" cy="417" r="5.2" fill="#a0aa7c" opacity="0.74"/><circle cx="763" cy="374" r="6.3" fill="#b8be98" opacity="0.41"/><circle cx="739" cy="423" r="10.3" fill="#a0aa7c" opacity="0.58"/><circle cx="642" cy="356" r="5.3" fill="#c0c6a2" opacity="0.53"/><circle cx="860" cy="342" r="7.1" fill="#a8b286" opacity="0.78"/><circle cx="520" cy="382" r="6.7" fill="#b8be98" opacity="0.67"/><circle cx="604" cy="357" r="7.8" fill="#b8be98" opacity="0.41"/><circle cx="755" cy="365" r="6.2" fill="#b8be98" opacity="0.47"/><circle cx="821" cy="373" r="8.9" fill="#a0aa7c" opacity="0.53"/><circle cx="795" cy="351" r="9.6" fill="#a0aa7c" opacity="0.57"/><circle cx="842" cy="353" r="7.7" fill="#b8be98" opacity="0.51"/><circle cx="718" cy="393" r="9.6" fill="#a8b286" opacity="0.72"/><circle cx="719" cy="405" r="6.4" fill="#c0c6a2" opacity="0.62"/><circle cx="540" cy="393" r="6.7" fill="#a8b286" opacity="0.54"/><circle cx="694" cy="338" r="11.7" fill="#c0c6a2" opacity="0.52"/><circle cx="626" cy="385" r="11.0" fill="#c0c6a2" opacity="0.78"/><circle cx="869" cy="379" r="8.1" fill="#a8b286" opacity="0.61"/><circle cx="597" cy="408" r="5.9" fill="#a0aa7c" opacity="0.67"/><circle cx="870" cy="415" r="10.2" fill="#b8be98" opacity="0.41"/><circle cx="700" cy="354" r="5.1" fill="#a0aa7c" opacity="0.68"/><circle cx="731" cy="347" r="6.3" fill="#a0aa7c" opacity="0.43"/><circle cx="869" cy="348" r="10.3" fill="#c0c6a2" opacity="0.43"/><circle cx="679" cy="411" r="5.9" fill="#b8be98" opacity="0.51"/><circle cx="558" cy="418" r="10.4" fill="#c0c6a2" opacity="0.77"/><circle cx="769" cy="418" r="10.6" fill="#a8b286" opacity="0.76"/><circle cx="881" cy="389" r="8.2" fill="#b8be98" opacity="0.54"/><circle cx="656" cy="358" r="5.8" fill="#c0c6a2" opacity="0.69"/><circle cx="754" cy="384" r="6.1" fill="#c0c6a2" opacity="0.70"/><circle cx="811" cy="430" r="8.9" fill="#c0c6a2" opacity="0.63"/><circle cx="735" cy="429" r="8.6" fill="#b8be98" opacity="0.67"/><circle cx="543" cy="349" r="5.8" fill="#a8b286" opacity="0.76"/><circle cx="823" cy="342" r="9.9" fill="#c0c6a2" opacity="0.67"/><circle cx="825" cy="389" r="10.4" fill="#a8b286" opacity="0.70"/><circle cx="858" cy="410" r="7.8" fill="#c0c6a2" opacity="0.51"/><circle cx="879" cy="416" r="8.0" fill="#a8b286" opacity="0.68"/><circle cx="702" cy="316" r="9.4" fill="#b8be98" opacity="0.60"/><circle cx="675" cy="352" r="9.7" fill="#c0c6a2" opacity="0.60"/><circle cx="788" cy="443" r="10.8" fill="#a8b286" opacity="0.47"/><circle cx="806" cy="433" r="6.7" fill="#a8b286" opacity="0.50"/><circle cx="826" cy="395" r="7.9" fill="#c0c6a2" opacity="0.65"/><circle cx="823" cy="424" r="8.4" fill="#b8be98" opacity="0.50"/><circle cx="722" cy="430" r="8.1" fill="#a8b286" opacity="0.68"/><circle cx="828" cy="424" r="9.1" fill="#c0c6a2" opacity="0.53"/><circle cx="774" cy="332" r="10.3" fill="#c0c6a2" opacity="0.67"/><circle cx="826" cy="437" r="10.9" fill="#b8be98" opacity="0.73"/><circle cx="796" cy="405" r="7.5" fill="#c0c6a2" opacity="0.42"/><circle cx="802" cy="357" r="5.8" fill="#a8b286" opacity="0.58"/><circle cx="801" cy="406" r="8.3" fill="#a8b286" opacity="0.52"/><circle cx="675" cy="375" r="8.3" fill="#b8be98" opacity="0.43"/><circle cx="674" cy="312" r="8.9" fill="#a0aa7c" opacity="0.66"/><circle cx="850" cy="367" r="10.5" fill="#a8b286" opacity="0.40"/><circle cx="855" cy="353" r="9.4" fill="#a8b286" opacity="0.66"/><circle cx="867" cy="409" r="5.2" fill="#b8be98" opacity="0.74"/><circle cx="690" cy="409" r="9.5" fill="#c0c6a2" opacity="0.44"/><circle cx="693" cy="342" r="9.3" fill="#b8be98" opacity="0.47"/><circle cx="767" cy="345" r="7.6" fill="#a8b286" opacity="0.74"/><circle cx="714" cy="397" r="5.8" fill="#b8be98" opacity="0.76"/><circle cx="847" cy="363" r="8.5" fill="#c0c6a2" opacity="0.80"/><circle cx="588" cy="347" r="6.0" fill="#c0c6a2" opacity="0.47"/><circle cx="530" cy="404" r="5.6" fill="#a0aa7c" opacity="0.74"/><circle cx="622" cy="384" r="7.6" fill="#a0aa7c" opacity="0.74"/><circle cx="824" cy="331" r="8.0" fill="#a8b286" opacity="0.43"/><circle cx="874" cy="400" r="11.2" fill="#a0aa7c" opacity="0.58"/><circle cx="624" cy="325" r="11.3" fill="#c0c6a2" opacity="0.55"/><circle cx="894" cy="382" r="9.7" fill="#c0c6a2" opacity="0.59"/><circle cx="576" cy="367" r="8.0" fill="#c0c6a2" opacity="0.79"/><circle cx="868" cy="367" r="10.7" fill="#a0aa7c" opacity="0.69"/><circle cx="635" cy="430" r="9.0" fill="#b8be98" opacity="0.78"/><circle cx="555" cy="387" r="7.1" fill="#a8b286" opacity="0.61"/><circle cx="592" cy="332" r="6.6" fill="#b8be98" opacity="0.68"/><circle cx="807" cy="422" r="8.9" fill="#b8be98" opacity="0.54"/><circle cx="723" cy="426" r="6.8" fill="#c0c6a2" opacity="0.47"/><circle cx="829" cy="347" r="5.8" fill="#a8b286" opacity="0.66"/><circle cx="778" cy="433" r="10.0" fill="#c0c6a2" opacity="0.62"/><circle cx="737" cy="432" r="5.8" fill="#a0aa7c" opacity="0.74"/><circle cx="638" cy="323" r="5.9" fill="#a0aa7c" opacity="0.65"/>
<path d="M505 424L925 490" stroke="#4a5238" stroke-width="6"/><path d="M505 428L925 492V560L505 462Z" fill="#7a8c4a"/>
<!-- parking / cars -->
<rect x="555" y="268" width="370" height="40" fill="#3a524c"/>
<rect x="622" y="286" width="95" height="30" rx="8" fill="#3f877c"/>
<rect x="730" y="270" width="60" height="22" fill="#2c3a3a"/>
<rect x="790" y="268" width="45" height="24" fill="#dfe6e6"/>
<rect x="845" y="272" width="75" height="28" fill="#4a8a6a"/>
<rect x="870" y="238" width="50" height="30" fill="#d8f0e0"/>
<!-- fence -->
<rect x="586" y="78" width="8" height="270" fill="#b9b9ae"/>
<rect x="572" y="78" width="22" height="8" fill="#555"/>
<rect x="848" y="150" width="5" height="140" fill="#a8a8a0"/>
<rect x="641" y="312" width="6" height="128" fill="#c9cdb8"/>
<rect x="757" y="320" width="6" height="135" fill="#d4d8c4"/>
<rect x="902" y="332" width="7" height="150" fill="#d4d8c4"/>
<path d="M757 322L925 336" stroke="#d8dcc8" stroke-width="5"/>
<path d="M560 318L925 345" stroke="#8d966e" stroke-width="4"/>
<rect x="838" y="364" width="44" height="46" fill="#2c2c2a"/>
<rect x="885" y="370" width="30" height="38" fill="#c8c8b4"/>
<!-- rail -->
<path d="M505 452L925 548" stroke="#2c2d28" stroke-width="12"/><path d="M505 455L925 551" stroke="#e4e4dc" stroke-width="6" stroke-dasharray="9 11"/>
<!-- ground -->
<path d="M495 468L925 556V720H20V470Z" fill="#d2d2ca"/>
<path d="M20 455L345 700V720H20Z" fill="#878786"/>
<path d="M20 528L235 720H222L20 540Z" fill="#bdbdb8"/>
<path d="M20 600L140 700" stroke="#6a6a68" stroke-width="5"/>
<!-- platform -->
<path d="M20 445L235 540L500 518L708 612L345 700L20 472Z" fill="url(#plat1)"/>
<path d="M400 560L560 540L660 600L520 650Z" fill="#ec8a78" opacity="0.5"/>
<path d="M24 462L335 690" stroke="#8a2c20" stroke-width="16"/>
<path d="M24 447L335 672" stroke="#c8402c" stroke-width="14"/>
<path d="M120 510L140 530M210 575L230 595M290 640L312 660" stroke="#e8a030" stroke-width="7"/>
<path d="M480 520L680 598" stroke="#4a3a30" stroke-width="6"/>
<path d="M530 545V560M605 565V585M680 590V608" stroke="#c88a30" stroke-width="6"/>
<!-- building -->
<path d="M103 108L188 72V168L103 175Z" fill="#76594c"/>
<path d="M188 72L378 78V165H188Z" fill="#dba674"/>
<path d="M99 108L188 68L382 75" stroke="#3c3a38" stroke-width="6" fill="none"/>
<path d="M112 122L180 100M112 150L180 130" stroke="#a8a4a0" stroke-width="9" stroke-dasharray="9 9"/>
<rect x="300" y="88" width="30" height="30" fill="#9a9a96"/>
<!-- trailer -->
<path d="M235 370H345V475H235Z" fill="#38383a"/>
<path d="M20 345L250 395L300 440V545L232 548L20 455Z" fill="#3a3a3b"/>
<path d="M20 395L230 470V535L20 450Z" fill="#232325"/>
<path d="M30 360L240 420" stroke="#5c5c5c" stroke-width="10"/>
<ellipse cx="75" cy="435" rx="16" ry="30" fill="#151517"/><ellipse cx="120" cy="455" rx="17" ry="32" fill="#151517"/><ellipse cx="168" cy="478" rx="18" ry="34" fill="#151517"/>
<path d="M230 520L520 510L560 555L300 575Z" fill="#7a2c22" opacity="0.75"/>
<rect x="235" y="502" width="280" height="26" fill="#bdbdb8"/>
<rect x="300" y="522" width="170" height="24" fill="#8a8a86"/>
<rect x="290" y="462" width="168" height="32" fill="#e0742c"/>
<rect x="233" y="450" width="55" height="62" fill="url(#chev)"/>
<path d="M455 440L512 446V496L455 490Z" fill="url(#chev)"/>
<!-- pipe body -->
<path d="M20 200L110 172L300 138L260 200L235 300L255 398L20 352Z" fill="url(#pipe1)"/>
<path d="M95 190Q70 270 100 360M150 180Q122 270 150 372M205 168Q175 270 205 385" stroke="#6f7c86" stroke-width="4" fill="none" opacity="0.7"/>
<path d="M20 205L110 175L295 140" stroke="#fbfdfe" stroke-width="9" fill="none"/>
<!-- pipe mouth -->
<ellipse cx="392" cy="285" rx="160" ry="181" fill="#f4f4f2"/>
<ellipse cx="394" cy="285" rx="146" ry="167" fill="#1d1d21"/>
<path d="M262 340A146 167 0 0 0 520 360Q400 420 262 340Z" fill="#3a3a3c" opacity="0.8"/>
<path d="M430 140L358 432" stroke="#d49860" stroke-width="6"/>
<path d="M250 245L525 322" stroke="#e2aa7c" stroke-width="6"/>
<!-- pole -->
<rect x="284" y="497" width="23" height="215" fill="#b6b6b2"/>
<rect x="284" y="497" width="6" height="215" fill="#8a8a88"/>
<!-- tape -->
<path d="M570 704L925 556" stroke="#f4e8e4" stroke-width="8"/>
<path d="M570 704L925 556" stroke="#c0382c" stroke-width="8" stroke-dasharray="7 7"/>
</g>
<rect x="0" y="0" width="940" height="24.3" fill="#fff"/><rect x="24" y="22" width="197" height="29" fill="#fff"/>
<text x="26" y="46" font-size="25" font-weight="bold" font-family="Liberation Mono, monospace" fill="#000" textLength="192" lengthAdjust="spacingAndGlyphs">00 10 13 11.21 10</text>
<rect x="20" y="700" width="900" height="6" fill="#111"/>
</svg>
<svg id="p2" style="left:56px;top:287px" width="221" height="168" viewBox="24.3 44.5 894.1 679.7" preserveAspectRatio="none">
<defs>
<linearGradient id="roof2" x1="0" y1="0" x2="0" y2="1"><stop offset="0" stop-color="#d49a80"/><stop offset="0.3" stop-color="#c07a58"/><stop offset="0.6" stop-color="#a85c3c"/><stop offset="1" stop-color="#8c4228"/></linearGradient>
<linearGradient id="ws2" x1="0" y1="0" x2="1" y2="1"><stop offset="0" stop-color="#50564f"/><stop offset="0.5" stop-color="#40453f"/><stop offset="1" stop-color="#363a36"/></linearGradient>
<filter id="bl2" x="-5%" y="-5%" width="110%" height="110%"><feGaussianBlur stdDeviation="2.4"/></filter>
</defs>
<rect x="0" y="0" width="940" height="760" fill="#fdfdfd"/>
<g filter="url(#bl2)">
<!-- background left -->
<rect x="20" y="150" width="95" height="66" fill="#6f8cab"/>
<rect x="20" y="180" width="95" height="30" fill="#4c6888"/>
<rect x="20" y="216" width="70" height="150" fill="#e6e8ea"/>
<path d="M24 260V360M40 260V360M56 270V360" stroke="#8a9096" stroke-width="3"/>
<rect x="20" y="362" width="60" height="130" fill="#7c8a48"/>
<path d="M20 490L110 470V640L20 690Z" fill="#dededa"/>
<!-- background right hall -->
<path d="M510 122L860 104V262L560 268Z" fill="#b4bcc5"/>
<path d="M510 122L860 104V185L640 190L560 175L520 170Z" fill="#8a97a6"/>
<rect x="640" y="195" width="165" height="16" fill="#c8d0d8"/>
<rect x="655" y="226" width="26" height="36" fill="#3a3e44"/>
<rect x="735" y="220" width="40" height="30" fill="#5a5e60"/>
<rect x="700" y="196" width="60" height="10" fill="#70767c"/>
<!-- gate structure right -->
<rect x="828" y="100" width="100" height="150" fill="#3d3632"/>
<rect x="838" y="140" width="40" height="60" fill="#7a3c30"/>
<rect x="826" y="60" width="6" height="240" fill="#9aa0a4"/>
<!-- road and grass -->
<path d="M590 262H930V300L600 312Z" fill="#dcdcd6"/>
<path d="M735 312L930 290V405H800Z" fill="#98a25a"/>
<path d="M640 318L740 312L810 410H640Z" fill="#b9b8b2"/>
<path d="M600 320L640 318V740H560Z" fill="#8c8e90"/>
<path d="M640 408H835L880 650V740H640Z" fill="#6b6d71"/>
<rect x="778" y="230" width="5" height="110" fill="#7a8084"/>
<!-- pole right -->
<rect x="878" y="44" width="24" height="360" fill="#b9bdc0"/>
<rect x="860" y="44" width="40" height="14" fill="#8a9094"/>
<!-- platform -->
<path d="M20 690L100 628L200 640L500 622L600 380L640 380L575 730H20Z" fill="#c8524a"/>
<path d="M604 390L535 715" stroke="#e2a432" stroke-width="7"/>
<path d="M24 660L95 615" stroke="#d8902c" stroke-width="6"/>
<path d="M100 625L560 600L545 670L130 690Z" fill="#7a2a22" opacity="0.7"/>
<!-- trailer behind cab -->
<path d="M512 140L585 195L600 300L525 335Z" fill="#aeb3b8"/>
<path d="M520 300L600 295V400L520 420Z" fill="#c4602f"/>
<path d="M500 440L575 400V540L520 610H500Z" fill="#262628"/><path d="M520 330L600 300V395L560 420L520 440Z" fill="#7a4028"/>
<!-- cab roof -->
<path d="M200 92L440 64L500 68L518 130V205L108 192L128 150L188 128Z" fill="url(#roof2)"/>
<path d="M180 136L470 122" stroke="#6a3424" stroke-width="8"/><path d="M215 126L375 112" stroke="#e4e4e4" stroke-width="7"/>
<path d="M105 165L480 145" stroke="#2c2c2c" stroke-width="9"/>
<rect x="375" y="100" width="24" height="28" fill="#f08a2a"/>
<!-- cab sides -->
<path d="M452 200L520 130L528 330L520 485L408 505L414 330Z" fill="#b85a34"/>
<path d="M72 362L135 358V512L88 505Z" fill="#c26036"/>
<path d="M455 215L490 205V330L455 340Z" fill="#2e3436"/>
<!-- visor + windshield -->
<path d="M84 194L452 180L456 216L80 228Z" fill="#302a28"/>
<path d="M88 227L452 213L446 347L98 358Z" fill="url(#ws2)"/>
<path d="M130 250L200 245L190 330L125 335Z" fill="#8a5a40" opacity="0.6"/>
<path d="M106 322L388 312L390 344L108 354Z" fill="#d9b832"/>

<!-- grille -->
<path d="M100 360L420 352L410 522L130 522Z" fill="#5e6060"/>
<path d="M160 417H365M166 450H365M172 486H365" stroke="#2c2e30" stroke-width="16"/>
<rect x="170" y="432" width="38" height="46" fill="#ecece8"/>
<!-- bumper -->
<path d="M94 510L500 500L512 612L100 628Z" fill="#3e4244"/>
<path d="M175 520H360M175 553H360" stroke="#2a2c2e" stroke-width="13"/>
<path d="M100 585L505 575L510 640L120 645Z" fill="#242426"/>
<rect x="100" y="548" width="42" height="28" fill="#ece6b0"/>
<rect x="404" y="545" width="58" height="28" fill="#f2f0e0"/>
<rect x="228" y="617" width="90" height="22" fill="#b4babf"/>
<!-- mirrors -->
<rect x="40" y="245" width="30" height="95" rx="6" fill="#2a2c2e"/>
<rect x="496" y="214" width="44" height="112" rx="6" fill="#242628"/>
<!-- barrier post -->
<rect x="625" y="314" width="9" height="90" fill="#d4d4d0"/>
<rect x="641" y="320" width="20" height="52" fill="#dd5e30"/>
<path d="M560 318L630 322" stroke="#d8d0cc" stroke-width="4"/>
<!-- guard -->
<rect x="846" y="368" width="50" height="22" rx="6" fill="#262828"/>
<rect x="846" y="390" width="36" height="32" fill="#c4a48c"/>
<path d="M850 425L930 402V532H850Z" fill="#c6e064"/>
<path d="M842 430L870 425L866 545L846 540Z" fill="#28342a"/>
<path d="M860 530H930V645H872Z" fill="#2a322e"/>
<path d="M835 360L860 380" stroke="#3a2a20" stroke-width="10"/>
<!-- gate bottom -->
<rect x="640" y="636" width="300" height="110" fill="#62666a"/>
<path d="M572 612L660 640V740H572Z" fill="#9ba1a5"/><rect x="585" y="430" width="22" height="200" fill="#aeb2b6"/>
<path d="M660 642H930" stroke="#a4aaae" stroke-width="6"/>
<path d="M690 642V730M730 642V730M770 642V730M810 642V730M850 642V730" stroke="#9aa0a4" stroke-width="4"/>
<!-- sign -->
<circle cx="802" cy="822" r="170" fill="#d4382c"/>
<circle cx="802" cy="822" r="122" fill="#b9c1ca"/>
</g>
<text x="116" y="346" transform="rotate(-2 116 346)" font-size="23" font-weight="bold" font-family="Liberation Sans, sans-serif" fill="#3a3212" textLength="266" lengthAdjust="spacingAndGlyphs">CONVOI EXCEPTIONNEL</text>
<text x="197" y="397" font-size="27" font-weight="bold" font-family="Liberation Sans, sans-serif" fill="#e8eaea" textLength="122" lengthAdjust="spacingAndGlyphs">SCANIA</text>
<rect x="24" y="45" width="197" height="27" fill="#fff"/>
<text x="26" y="68" font-size="25" font-weight="bold" font-family="Liberation Mono, monospace" fill="#000" textLength="192" lengthAdjust="spacingAndGlyphs">00 10 13 11.21 10</text>
</svg>

<svg id="p3" style="left:56px;top:456px" width="221" height="166" viewBox="24.3 32.4 894.1 667.6" preserveAspectRatio="none">
<defs>
<linearGradient id="pv3" x1="0" y1="0" x2="0" y2="1"><stop offset="0" stop-color="#a89c8c"/><stop offset="0.4" stop-color="#bcae9c"/><stop offset="1" stop-color="#c0b2a0"/></linearGradient>
<linearGradient id="tank3" x1="0" y1="0" x2="0" y2="1"><stop offset="0" stop-color="#e4e8ee"/><stop offset="0.3" stop-color="#fbfcfd"/><stop offset="0.55" stop-color="#eef1f5"/><stop offset="0.8" stop-color="#c0cad6"/><stop offset="1" stop-color="#98aab6"/></linearGradient>
<linearGradient id="cap3" x1="0" y1="0" x2="1" y2="0.3"><stop offset="0" stop-color="#e8edf2"/><stop offset="0.5" stop-color="#cfd8e2"/><stop offset="1" stop-color="#e9eef3"/></linearGradient>
<filter id="bl3" x="-5%" y="-5%" width="110%" height="110%"><feGaussianBlur stdDeviation="2.6"/></filter>
</defs>
<rect x="0" y="0" width="940" height="720" fill="#33421f"/>
<g filter="url(#bl3)">
<path d="M20 130C200 62 400 50 485 61S800 100 930 148V300H20Z" fill="url(#pv3)"/>
<path d="M20 128C200 60 400 48 485 59S800 98 930 146" stroke="#5a5a48" stroke-width="8" fill="none"/><path d="M20 152C200 84 400 72 485 83S800 122 930 170" stroke="#8a8276" stroke-width="36" fill="none" opacity="0.5"/>
<path d="M560 40Q800 60 930 125V30H560Z" fill="#43562a"/>
<path d="M20 175C200 110 400 98 485 108S800 146 930 192" stroke="#6a6258" stroke-width="3" fill="none" opacity="0.6"/>
<path d="M280 72L110 140M520 72L390 185M660 85L625 125M840 100L790 150M440 75L470 112H280" stroke="#3c3a36" stroke-width="4" fill="none" opacity="0.8"/>
<!-- left machinery -->
<path d="M20 250L135 258V560L20 540Z" fill="#181818"/>
<rect x="30" y="310" width="40" height="60" fill="#2c5a60"/>
<rect x="40" y="330" width="60" height="50" fill="#7a6a58"/>
<rect x="30" y="400" width="50" height="90" fill="#4a3c28"/>
<!-- bottom dark bed -->
<path d="M20 500L130 540L200 610H700L930 540V720H20Z" fill="#1c2c2c"/>
<path d="M20 600H930V720H20Z" fill="#1b2e2e"/>
<rect x="180" y="660" width="50" height="40" fill="#2e4442"/>
<path d="M880 640L930 610V720H880Z" fill="#8fa096"/>
<!-- tank -->
<path d="M205 186L700 200Q850 215 930 262V568Q800 612 650 612L190 612Q110 520 112 400Q114 260 205 186Z" fill="url(#tank3)"/>
<path d="M205 186Q112 260 112 400Q112 530 195 612L300 606Q262 500 258 400Q256 280 285 192Z" fill="url(#cap3)"/>
<path d="M120 420Q135 560 200 608L640 610Q420 590 300 520Q200 470 120 420Z" fill="#a8b8c4" opacity="0.5"/>
<path d="M188 182Q215 176 240 186" stroke="#fff" stroke-width="10" fill="none"/>
<path d="M283 192Q235 400 310 606" stroke="#d56a52" stroke-width="8" fill="none"/>
<path d="M676 200Q765 400 655 608" stroke="#9a5a4a" stroke-width="8" fill="none"/>
<path d="M690 215Q775 400 668 600" stroke="#c8b070" stroke-width="3" fill="none" opacity="0.7"/>
<path d="M490 285L830 512" stroke="#4a5a58" stroke-width="3" fill="none" opacity="0.8"/>
<path d="M668 380V515H700" stroke="#6a7680" stroke-width="3" fill="none" opacity="0.8"/>
<path d="M850 232Q905 262 918 310" stroke="#3a3a3a" stroke-width="3" fill="none" opacity="0.7"/>
</g>
<rect x="24" y="33" width="197" height="27" fill="#fff"/>
<text x="26" y="56" font-size="25" font-weight="bold" font-family="Liberation Mono, monospace" fill="#000" textLength="192" lengthAdjust="spacingAndGlyphs">00 10 13 11.21 10</text>
</svg>

<div class="a" style="left:56px;top:635px;width:35px;height:26px;background:#e9e9e9;border:1px solid #b2b2b2;"></div>
<svg style="left:64px;top:638px" width="20" height="20" viewBox="0 0 20 20"><path d="M5.5 2.5h7l4 4v11h-11z" fill="#dfe9fb" stroke="#8e98c0"/><path d="M12.5 2.5v4h4" fill="#fbfcff" stroke="#8e98c0"/><circle cx="10" cy="10.5" r="2.8" fill="#e4f2ff" stroke="#5a70b0" stroke-width="1.2"/><path d="M7.8 12.8L3.2 17" stroke="#e0812c" stroke-width="2.1" stroke-linecap="round"/></svg>
<div class="a" style="left:205px;top:636px;width:73px;height:23px;background:#e5eef8;border:1px solid #4a94de;"></div>
<div class="a" style="left:206px;top:637px;width:71px;height:21px;background:linear-gradient(#f0f0f0,#e4e4e4);border:1px solid #e6f2fc;"></div>
<span class="t " id="zam" style="left:222.25px;top:641.54px;font-size:11px;font-weight:normal;color:#000;transform:scaleX(0.9460);">Zamknij</span>
<div class="a" style="left:312px;top:143px;width:746px;height:464px;background:#6bb5fa;border:1px solid #4884c4;"></div>
<svg id="ico2" style="left:322px;top:150px" width="16" height="16" viewBox="0 0 16 16"><rect x="0.5" y="0.5" width="15" height="15" fill="#e9f8ff" stroke="#2478b6"/><text x="2.2" y="11.3" font-size="8.6" font-weight="bold" fill="#0f5590" stroke="#0f5590" stroke-width="0.4" font-family="Liberation Sans, sans-serif" textLength="11.8" lengthAdjust="spacingAndGlyphs">GSW</text></svg>
<span class="t " id="wt" style="left:656.99px;top:150.76px;font-size:14.3px;font-weight:normal;color:#1b2f4a;transform:scaleX(1.0294);">Ważenie</span>
<div class="a" style="left:1020px;top:144px;width:31px;height:20px;background:#c9484c;"></div>
<svg style="left:1031.6px;top:150.6px" width="9" height="8" viewBox="0 0 9 8"><path d="M0.8 0.5L8.2 7.5M8.2 0.5L0.8 7.5" stroke="#fff" stroke-width="1.5" fill="none"/></svg>
<div class="a" style="left:319px;top:173px;width:732px;height:427px;background:#5b9fe2;"></div>
<div class="a" style="left:320px;top:174px;width:730px;height:425px;background:#f0f0f0;"></div>
<div class="a" style="left:328px;top:182px;width:714px;height:353px;background:#f0f0f0;border:1px solid #a0a0a0;box-shadow:inset 1px 1px 0 #fff, 1px 1px 0 #fff;"></div>
<div class="a" style="left:1041px;top:274px;width:1px;height:156px;background:#f0f0f0;"></div>
<div class="a" style="left:330px;top:214px;width:711px;height:1px;background:#a0a0a0;"></div>
<div class="a" style="left:330px;top:215px;width:711px;height:1px;background:#fff;"></div>
<span class="t " id="l0" style="left:342.20px;top:192.24px;font-size:11px;font-weight:bold;color:#000;transform:scaleX(0.9843);-webkit-text-stroke:0.3px #000;">WAŻENIE DLA</span>
<div class="a" style="left:442px;top:188px;width:528px;height:21px;background:#fff;border:1px solid #7a7a7a;"></div>
<span class="t " id="ph" style="left:444.04px;top:192.74px;font-size:11px;font-weight:normal;color:#7c7c7c;transform:scaleX(0.9893);">Producent Kontrukcji Stalowych S.A,</span>
<span class="t " id="ph2" style="left:621.93px;top:192.74px;font-size:11px;font-weight:normal;color:#6a6a6a;transform:scaleX(1.4088);">..........,</span>
<span class="t " id="ph3" style="left:669.80px;top:192.74px;font-size:11px;font-weight:normal;color:#6a6a6a;transform:scaleX(1.2821);">..........</span>
<div class="a" style="left:978px;top:184px;width:1px;height:29px;background:#a0a0a0;"></div>
<div class="a" style="left:979px;top:184px;width:1px;height:29px;background:#fff;"></div>
<svg style="left:988px;top:188px" width="16" height="16" viewBox="0 0 16 16"><defs><linearGradient id="rx1" x1="0" y1="0" x2="0" y2="1"><stop offset="0" stop-color="#ee5a48"/><stop offset="0.5" stop-color="#d42418"/><stop offset="1" stop-color="#b80c0c"/></linearGradient></defs><path d="M4 4L12 12M12 4L4 12" stroke="#8e0a0a" stroke-width="5.2" stroke-linecap="round" fill="none"/><path d="M4 4L12 12M12 4L4 12" stroke="url(#rx1)" stroke-width="3.6" stroke-linecap="round" fill="none"/></svg>
<div class="a" style="left:330px;top:216px;width:711px;height:56px;background:#d6d6d6;"></div>
<div class="a" style="left:330px;top:272px;width:711px;height:1px;background:#a0a0a0;"></div>
<div class="a" style="left:330px;top:273px;width:711px;height:1px;background:#fff;"></div>
<span class="t " id="l1" style="left:343.50px;top:224.24px;font-size:13px;font-weight:bold;color:#000;transform:scaleX(0.9145);-webkit-text-stroke:0.45px #000;">NUMER REJESTRACYJNY</span>
<span class="t " id="l2" style="left:343.50px;top:248.24px;font-size:13px;font-weight:bold;color:#000;transform:scaleX(0.9194);-webkit-text-stroke:0.45px #000;">NUMER NACZEPY</span>
<svg style="left:542.4px;top:226.5px" width="16" height="13" viewBox="0 0 16 13"><defs><linearGradient id="ga" x1="0" y1="0" x2="0" y2="1"><stop offset="0" stop-color="#86ec58"/><stop offset="1" stop-color="#38bc1c"/></linearGradient></defs><path d="M0.8 3.8h7.6V0.9L14.6 6.5L8.4 12.1V9.2H0.8Z" fill="url(#ga)" stroke="#1f7a12" stroke-width="1.1" stroke-linejoin="round"/></svg>
<div class="a" style="left:569px;top:223px;width:149px;height:19px;background:#fff;border:1px solid #6e6e6e;"></div>
<div class="a" style="left:569px;top:247px;width:149px;height:19px;background:#fff;border:1px solid #6e6e6e;"></div>
<span class="t " id="kr1" style="left:571.48px;top:226.04px;font-size:11px;font-weight:bold;color:#0000c8;transform:scaleX(1.0478);-webkit-text-stroke:0.3px #0000c8;">KR 1234A</span>
<span class="t " id="kr2" style="left:571.48px;top:250.04px;font-size:11px;font-weight:bold;color:#0000c8;transform:scaleX(1.0438);-webkit-text-stroke:0.3px #0000c8;">KR 5678B</span>
<svg style="left:726.5px;top:225.5px" width="13" height="15" viewBox="0 0 13 15"><path d="M4 0.7h5v7h2.8L6.5 13.5L1.2 7.7h2.8Z" fill="#4ccc24" stroke="#1f7a12" stroke-width="1.1" stroke-linejoin="round"/><path d="M5 1.6h1.6v7H5z" fill="#a6f07c" opacity="0.75"/></svg>
<div class="a" style="left:749px;top:221px;width:1px;height:46px;background:#a0a0a0;"></div>
<div class="a" style="left:750px;top:221px;width:1px;height:46px;background:#fff;"></div>
<span class="t " id="tara" style="left:757.54px;top:224.24px;font-size:13px;font-weight:bold;color:#000;-webkit-text-stroke:0.45px #000;">TARA</span>
<span class="t " id="typ" style="left:758.04px;top:248.04px;font-size:13px;font-weight:bold;color:#000;transform:scaleX(0.8985);-webkit-text-stroke:0.45px #000;">TYP</span>
<div class="a" style="left:802px;top:222px;width:60px;height:21px;background:#fff;border:1px solid #b4b4b4;"></div>
<span class="t " id="tz" style="left:853.30px;top:226.04px;font-size:11px;font-weight:bold;color:#0000c8;transform:scaleX(1.1158);-webkit-text-stroke:0.3px #0000c8;">0</span>
<span class="t " id="kg" style="left:865.93px;top:224.24px;font-size:13px;font-weight:bold;color:#000;transform:scaleX(1.0314);-webkit-text-stroke:0.45px #000;">kg</span>
<div class="a" style="left:802px;top:246px;width:235px;height:21px;background:linear-gradient(#f4f4f4,#e9e9e9);border:1px solid #8e8e8e;box-shadow:inset 0 0 0 1px #fcfcfc;"></div>
<span class="t " id="prz" style="left:806.50px;top:251.04px;font-size:11px;font-weight:bold;color:#000;transform:scaleX(1.0916);-webkit-text-stroke:0.3px #000;">Przyjęcie zewnętrzne</span>
<div class="a" style="left:1018px;top:248px;width:17px;height:17px;background:#fafafa;border:1px solid #a4a4a4;"></div>
<svg style="left:1023px;top:254px" width="8" height="5" viewBox="0 0 8 5"><path d="M0 0h8L4 4.5Z" fill="#111"/></svg>
<span class="t " id="l3" style="left:343.49px;top:281.24px;font-size:13px;font-weight:bold;color:#000;transform:scaleX(0.8911);-webkit-text-stroke:0.45px #000;">KONTRAHENT</span>
<div class="a" style="left:569px;top:277px;width:344px;height:21px;background:#fff;border:1px solid #6e6e6e;"></div>
<span class="t " id="vl3" style="left:570.00px;top:278.85px;font-size:11px;font-weight:bold;color:#0000c8;transform:scaleX(0.9972);-webkit-text-stroke:0.3px #0000c8;">TRANS-GAZ</span>
<svg style="left:929.6px;top:280.6px" width="13" height="15" viewBox="0 0 13 15"><path d="M4 0.7h5v7h2.8L6.5 13.5L1.2 7.7h2.8Z" fill="#4ccc24" stroke="#1f7a12" stroke-width="1.1" stroke-linejoin="round"/><path d="M5 1.6h1.6v7H5z" fill="#a6f07c" opacity="0.75"/></svg>
<svg style="left:964px;top:280.2px" width="13" height="16" viewBox="0 0 13 16"><path d="M0.5 0.5h7l4 4v11h-11z" fill="#e6eefc" stroke="#98a0c6"/><path d="M7.5 0.5v4h4" fill="#fbfcff" stroke="#98a0c6"/></svg>
<span class="t " id="fl3" style="left:981.50px;top:281.24px;font-size:13px;font-weight:bold;color:#000;transform:scaleX(0.9109);-webkit-text-stroke:0.45px #000;">F1</span>
<span class="t " id="l4" style="left:343.49px;top:308.24px;font-size:13px;font-weight:bold;color:#000;transform:scaleX(0.9016);-webkit-text-stroke:0.45px #000;">PRODUKT</span>
<div class="a" style="left:569px;top:304px;width:344px;height:21px;background:#fff;border:1px solid #6e6e6e;"></div>
<span class="t " id="vl4" style="left:569.50px;top:305.85px;font-size:11px;font-weight:bold;color:#0000c8;transform:scaleX(0.9272);-webkit-text-stroke:0.3px #0000c8;">ELEMENTY KONSTRUKCYJNE</span>
<svg style="left:929.6px;top:307.6px" width="13" height="15" viewBox="0 0 13 15"><path d="M4 0.7h5v7h2.8L6.5 13.5L1.2 7.7h2.8Z" fill="#4ccc24" stroke="#1f7a12" stroke-width="1.1" stroke-linejoin="round"/><path d="M5 1.6h1.6v7H5z" fill="#a6f07c" opacity="0.75"/></svg>
<svg style="left:964px;top:307.2px" width="13" height="16" viewBox="0 0 13 16"><path d="M0.5 0.5h7l4 4v11h-11z" fill="#e6eefc" stroke="#98a0c6"/><path d="M7.5 0.5v4h4" fill="#fbfcff" stroke="#98a0c6"/></svg>
<span class="t " id="fl4" style="left:981.49px;top:308.24px;font-size:13px;font-weight:bold;color:#000;transform:scaleX(0.9288);-webkit-text-stroke:0.45px #000;">F2</span>
<span class="t " id="l5" style="left:343.48px;top:335.04px;font-size:13px;font-weight:bold;color:#000;transform:scaleX(0.9593);-webkit-text-stroke:0.45px #000;">KIEROWCA</span>
<div class="a" style="left:569px;top:331px;width:344px;height:21px;background:#fff;border:1px solid #6e6e6e;"></div>
<span class="t " id="vl5" style="left:570.50px;top:332.85px;font-size:11px;font-weight:bold;color:#0000c8;transform:scaleX(0.9906);-webkit-text-stroke:0.3px #0000c8;">ALBERT NOWICKI</span>
<svg style="left:929.6px;top:334.6px" width="13" height="15" viewBox="0 0 13 15"><path d="M4 0.7h5v7h2.8L6.5 13.5L1.2 7.7h2.8Z" fill="#4ccc24" stroke="#1f7a12" stroke-width="1.1" stroke-linejoin="round"/><path d="M5 1.6h1.6v7H5z" fill="#a6f07c" opacity="0.75"/></svg>
<svg style="left:964px;top:334.2px" width="13" height="16" viewBox="0 0 13 16"><path d="M0.5 0.5h7l4 4v11h-11z" fill="#e6eefc" stroke="#98a0c6"/><path d="M7.5 0.5v4h4" fill="#fbfcff" stroke="#98a0c6"/></svg>
<span class="t " id="fl5" style="left:981.49px;top:335.04px;font-size:13px;font-weight:bold;color:#000;transform:scaleX(0.9290);-webkit-text-stroke:0.45px #000;">F3</span>
<div class="a" style="left:329px;top:354px;width:713px;height:27px;background:#ff962e;"></div>
<span class="t " id="l6" style="left:343.49px;top:362.04px;font-size:13px;font-weight:bold;color:#000;transform:scaleX(1.0214);-webkit-text-stroke:0.45px #000;">UWAGI</span>
<div class="a" style="left:569px;top:358px;width:344px;height:22px;background:#ffffaa;border:1px solid #8a7a5a;"></div>
<div class="a" style="left:330px;top:430px;width:711px;height:1px;background:#a0a0a0;"></div>
<div class="a" style="left:330px;top:431px;width:711px;height:1px;background:#fff;"></div>
<div class="a" style="left:330px;top:432px;width:711px;height:102px;background:#d6d6d6;"></div>
<span class="t " id="b1" style="left:334.30px;top:442.05px;font-size:11px;font-weight:bold;color:#000;-webkit-text-stroke:0.3px #000;">WJAZDOWY</span>
<span class="t " id="b2" style="left:334.80px;top:463.85px;font-size:11px;font-weight:bold;color:#000;transform:scaleX(0.9914);-webkit-text-stroke:0.3px #000;">WYJAZDOWY</span>
<span class="t " id="b3" style="left:333.54px;top:486.85px;font-size:11px;font-weight:bold;color:#000;transform:scaleX(0.9444);-webkit-text-stroke:0.3px #000;">NETTO</span>
<span class="t " id="b4" style="left:333.55px;top:512.34px;font-size:11px;font-weight:bold;color:#000;transform:scaleX(0.9513);-webkit-text-stroke:0.3px #000;">NETTO DEKLAROWANE</span>
<div class="a" style="left:488px;top:437px;width:71px;height:21px;background:#d6d6d6;border:1px solid #a8a8a8;border-right-color:#fff;border-bottom-color:#fff;"></div>
<div class="a" style="left:488px;top:459px;width:71px;height:21px;background:#d6d6d6;border:1px solid #a8a8a8;border-right-color:#fff;border-bottom-color:#fff;"></div>
<div class="a" style="left:488px;top:481px;width:71px;height:21px;background:#f0f0f0;border:1px solid #a8a8a8;border-right-color:#fff;border-bottom-color:#fff;"></div>
<div class="a" style="left:488px;top:508px;width:71px;height:19px;background:#fff;border:1px solid #555;"></div>
<span class="t " id="nz" style="left:550.19px;top:511.55px;font-size:11px;font-weight:bold;color:#0000c8;transform:scaleX(1.1736);-webkit-text-stroke:0.3px #0000c8;">0</span>
<div class="a" style="left:567px;top:436px;width:195px;height:43px;background:#0000fa;border:1px solid #c4c4c4;border-right-color:#fff;border-bottom-color:#fff;"></div>
<span class="t " id="wg" style="left:606.65px;top:440.84px;font-size:32px;font-weight:bold;color:#fff;transform:scaleX(1.0948);-webkit-text-stroke:0.9px #fff;">26780 kg</span>
<div class="a" style="left:769px;top:437px;width:216px;height:41px;background:#efefef;border:1px solid #b8b8b8;box-shadow:inset 1px 1px 0 #fafafa;"></div>
<span class="t " id="wyk" style="left:792.00px;top:447.61px;font-size:19px;font-weight:normal;color:#000;transform:scaleX(0.9240);">WYKONAJ WAŻENIE</span>
<div class="a" style="left:993px;top:437px;width:40px;height:40px;background:#f0f0f0;"></div>
<span class="t " id="zero" style="left:997.70px;top:445.24px;font-size:22.5px;font-weight:normal;color:#808080;transform:scaleX(1.1350);">-0-</span>
<div class="a" style="left:567px;top:482px;width:467px;height:20px;background:#f0f0f0;border:1px solid #a8a8a8;border-right-color:#fff;border-bottom-color:#fff;"></div>
<span class="t lnk" id="k1" style="left:565.79px;top:513.04px;font-size:11px;font-weight:normal;color:#8b0a1a;transform:scaleX(0.9856);">Lista pierwszych ważeń</span>
<span class="t lnk" id="k2" style="left:693.72px;top:513.04px;font-size:11px;font-weight:normal;color:#8b0a1a;transform:scaleX(0.9944);">Lista ważeń</span>
<span class="t lnk" id="k3" style="left:765.02px;top:513.04px;font-size:11px;font-weight:normal;color:#8b0a1a;transform:scaleX(1.0520);">Raport</span>
<span class="t lnk" id="k4" style="left:814.00px;top:513.04px;font-size:11px;font-weight:normal;color:#8b0a1a;transform:scaleX(1.0510);">Drukuj</span>
<span class="t lnk" id="k5" style="left:886.50px;top:513.04px;font-size:11px;font-weight:normal;color:#8b0a1a;transform:scaleX(1.0031);">Zestawy danych</span>
<div class="a" style="left:328px;top:539px;width:179px;height:35px;background:#f0f0f0;border:1px solid #a8a8a8;box-shadow:inset 1px 1px 0 #fff, 1px 1px 0 #fff;"></div>
<div class="a" style="left:508px;top:539px;width:179px;height:35px;background:#f0f0f0;border:1px solid #a8a8a8;box-shadow:inset 1px 1px 0 #fff, 1px 1px 0 #fff;"></div>
<div class="a" style="left:688px;top:539px;width:179px;height:35px;background:#f0f0f0;border:1px solid #a8a8a8;box-shadow:inset 1px 1px 0 #fff, 1px 1px 0 #fff;"></div>
<div class="a" style="left:868px;top:539px;width:175px;height:35px;background:#f0f0f0;border:1px solid #a8a8a8;box-shadow:inset 1px 1px 0 #fff, 1px 1px 0 #fff;"></div>
<span class="t " id="one" style="left:334.44px;top:548.54px;font-size:11px;font-weight:bold;color:#000;transform:scaleX(0.9259);-webkit-text-stroke:0.3px #000;">1</span>
<div class="a" style="left:345px;top:545px;width:79px;height:22px;background:#fff;border:1px solid #b0b0b0;"></div>
<svg style="left:442.6px;top:548.2px" width="13" height="15" viewBox="0 0 13 15"><path d="M3.6 14.3h5.8V6.8h2.9L6.5 0.8L0.7 6.8h2.9Z" fill="#4ccc24" stroke="#1f7a12" stroke-width="1.1" stroke-linejoin="round"/></svg>
<svg style="left:480px;top:548.3px" width="16" height="16" viewBox="0 0 16 16"><defs><linearGradient id="rx2" x1="0" y1="0" x2="0" y2="1"><stop offset="0" stop-color="#ee5a48"/><stop offset="0.5" stop-color="#d42418"/><stop offset="1" stop-color="#b80c0c"/></linearGradient></defs><path d="M4 4L12 12M12 4L4 12" stroke="#8e0a0a" stroke-width="5.2" stroke-linecap="round" fill="none"/><path d="M4 4L12 12M12 4L4 12" stroke="url(#rx2)" stroke-width="3.6" stroke-linecap="round" fill="none"/></svg>
</body>
</html>
